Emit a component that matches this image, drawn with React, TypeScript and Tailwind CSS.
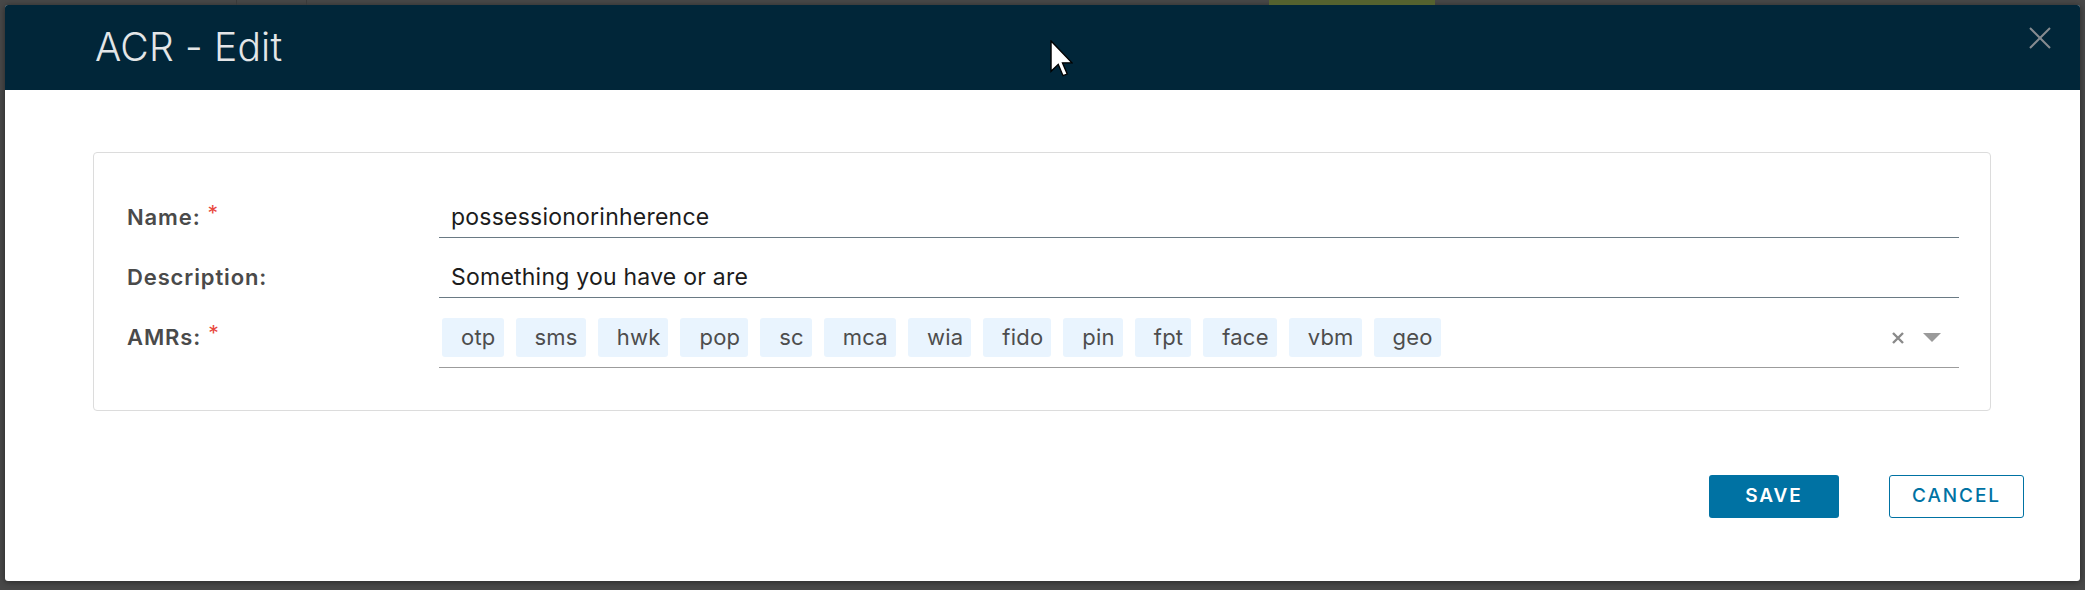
/**
 * ACR - Edit — modal de edição de um ACR
 */

const AMRS = ['otp', 'sms', 'hwk', 'pop', 'sc', 'mca', 'wia', 'fido', 'pin', 'fpt', 'face', 'vbm', 'geo']

function Field({ label, required, children }: { label: string; required?: boolean; children: React.ReactNode }) {
  return (
    <div className="flex items-start">
      <div className="w-[312px] h-[40px] shrink-0 flex items-center text-[22px] font-semibold tracking-[0.04em] text-[#4a4a4a]">
        {label}
        {required && <span className="ml-[7px] text-[21px] font-normal text-[#e8473d] -translate-y-[3px]">*</span>}
      </div>
      {children}
    </div>
  )
}

function TextInput({ value }: { value: string }) {
  return (
    <div className="flex-1 h-[41px] border-b border-[#6a7a84] px-[12px] flex items-center text-[23px] tracking-[0.01em] text-[#1c1c1c]">
      {value}
    </div>
  )
}

export default function App() {
  return (
    <div className="relative w-[2085px] h-[590px] overflow-hidden bg-[#484848] pt-[5px] pl-[5px] pr-[5px] pb-[9px] flex font-['Inter','Liberation_Sans',sans-serif]">
      {/* página por trás do overlay */}
      <div className="absolute left-[1269px] top-0 w-[166px] h-[5px] bg-[#55622f]" />
      <div className="absolute left-[236px] top-0 w-px h-[5px] bg-[#3a3a3a]" />
      <div className="absolute left-[306px] top-0 w-px h-[5px] bg-[#3a3a3a]" />

      <div className="flex flex-1 flex-col bg-white rounded-[3px] shadow-[0_1px_6px_rgba(0,0,0,0.45)] overflow-hidden">
        {/* Header */}
        <div className="h-[85px] shrink-0 bg-[#012639] flex items-start justify-between">
          <h1 className="h-full flex items-center pl-[90px] text-[39px] font-light text-[#e4e6e8] tracking-[0.005em]">
            ACR - Edit
          </h1>
          <button type="button" className="mt-[22px] mr-[29px]">
            <svg width="22" height="22" viewBox="0 0 22 22">
              <path d="M1 1 L21 21 M21 1 L1 21" stroke="#868b90" strokeWidth="2" />
            </svg>
          </button>
        </div>

        {/* Corpo */}
        <div className="pl-[88px] pr-[89px] pt-[62px]">
          <div className="border border-[#dcdcdc] rounded-[4px] pt-[44px] pb-[42px] pl-[33px] pr-[31px] flex flex-col gap-[19px]">
            <Field label="Name:" required>
              <TextInput value="possessionorinherence" />
            </Field>
            <Field label="Description:">
              <TextInput value="Something you have or are" />
            </Field>
            <Field label="AMRs:" required>
              <div className="flex-1 mt-[1px] border-b border-[#9c9c9c] pb-[10px] pl-[3px] pr-[18px] flex items-center">
                <div className="flex gap-[12px]">
                  {AMRS.map((amr) => (
                    <span
                      key={amr}
                      className="h-[39px] pl-[19px] pr-[8px] rounded-[3px] bg-[#e9f4fe] flex items-center text-[22px] tracking-[0.01em] text-[#4d4d4d]"
                    >
                      {amr}
                    </span>
                  ))}
                </div>
                <div className="ml-auto flex items-center gap-[19px]">
                  <svg width="12" height="12" viewBox="0 0 12 12">
                    <path d="M1 1 L11 11 M11 1 L1 11" stroke="#8a8a8a" strokeWidth="2.4" />
                  </svg>
                  <svg width="18" height="9" viewBox="0 0 18 9">
                    <path d="M0 0 H18 L9 9 Z" fill="#9a9a9a" />
                  </svg>
                </div>
              </div>
            </Field>
          </div>
        </div>

        {/* Rodapé */}
        <div className="flex justify-end gap-[50px] pt-[64px] pr-[56px]">
          <button
            type="button"
            className="w-[130px] h-[43px] rounded-[3px] bg-[#0072a3] text-white text-[19px] font-semibold tracking-[0.1em]"
          >
            SAVE
          </button>
          <button
            type="button"
            className="w-[135px] h-[43px] rounded-[3px] border border-[#0072a3] bg-white text-[#0072a3] text-[19px] font-medium tracking-[0.1em]"
          >
            CANCEL
          </button>
        </div>
      </div>

      {/* cursor do mouse */}
      <svg className="absolute left-[1050px] top-[40px]" width="23" height="38" viewBox="0 0 12 20">
        <path d="M0.5 0.5 L0.5 16.5 L4.3 12.8 L6.8 18.8 L9 17.9 L6.5 12 L11.5 12 Z" fill="#fff" stroke="#000" strokeWidth="0.7" />
      </svg>
    </div>
  )
}
